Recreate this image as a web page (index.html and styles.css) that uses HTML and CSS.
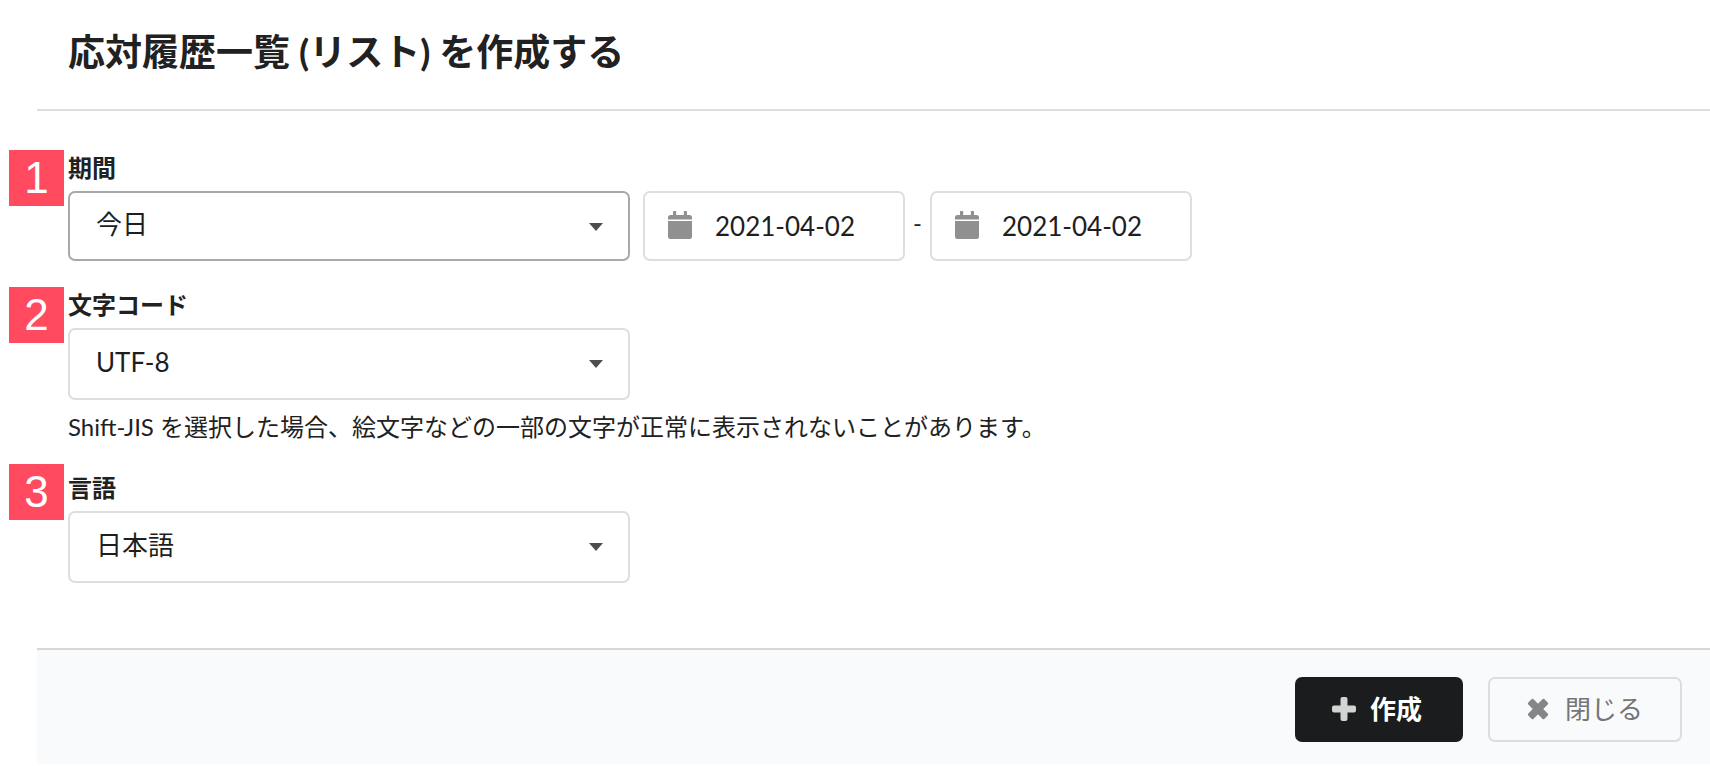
FILE: index.html
```html
<!DOCTYPE html>
<html lang="ja">
<head>
    <meta charset="UTF-8">
    <meta name="viewport" content="width=device-width, initial-scale=1.0">
    <title>応対履歴一覧 (リスト) を作成する</title>
    <link rel="stylesheet" href="styles.css">
</head>
<body>
    <form class="modal">
        <header class="modal-header">
            <h1>応対履歴一覧 (リスト) を作成する</h1>
        </header>

        <div class="modal-body">
            <div class="field">
                <span class="badge">1</span>
                <label for="period">期間</label>
                <div class="row">
                    <div class="dropdown active">
                        <select id="period">
                            <option>今日</option>
                        </select>
                    </div>
                    <div class="dates">
                        <div class="date">
                            <svg class="calendar" viewBox="0 0 24 28" aria-hidden="true">
                                <path d="M0 10h24v15.500a2.500 2.500 0 0 1-2.500 2.500h-19A2.500 2.500 0 0 1 0 25.500zM0 8.500V6.500A2.500 2.500 0 0 1 2.500 4H5V.8a.8.8 0 0 1 .8-.8h1.600a.8.8 0 0 1 .8.8V4h7.600V.8a.8.8 0 0 1 .8-.8h1.600a.8.8 0 0 1 .8.8V4h2.500A2.500 2.500 0 0 1 24 6.500v2z"/>
                            </svg>
                            <input type="text" value="2021-04-02" aria-label="開始日">
                        </div>
                        <span class="dash">-</span>
                        <div class="date">
                            <svg class="calendar" viewBox="0 0 24 28" aria-hidden="true">
                                <path d="M0 10h24v15.500a2.500 2.500 0 0 1-2.500 2.500h-19A2.500 2.500 0 0 1 0 25.500zM0 8.500V6.500A2.500 2.500 0 0 1 2.500 4H5V.8a.8.8 0 0 1 .8-.8h1.600a.8.8 0 0 1 .8.8V4h7.600V.8a.8.8 0 0 1 .8-.8h1.600a.8.8 0 0 1 .8.8V4h2.500A2.500 2.500 0 0 1 24 6.500v2z"/>
                            </svg>
                            <input type="text" value="2021-04-02" aria-label="終了日">
                        </div>
                    </div>
                </div>
            </div>

            <div class="field">
                <span class="badge">2</span>
                <label for="encoding">文字コード</label>
                <div class="dropdown">
                    <select id="encoding">
                        <option>UTF-8</option>
                        <option>Shift-JIS</option>
                    </select>
                </div>
                <p class="help">Shift-JIS を選択した場合、絵文字などの一部の文字が正常に表示されないことがあります。</p>
            </div>

            <div class="field">
                <span class="badge badge-high">3</span>
                <label for="language">言語</label>
                <div class="dropdown">
                    <select id="language">
                        <option>日本語</option>
                    </select>
                </div>
            </div>
        </div>

        <footer class="modal-footer">
            <button type="submit" class="btn btn-primary">
                <svg class="icon" viewBox="0 0 24 24" aria-hidden="true">
                    <path d="M10.500 0h3a2 2 0 0 1 2 2v6.500H22a2 2 0 0 1 2 2v3a2 2 0 0 1-2 2h-6.500V22a2 2 0 0 1-2 2h-3a2 2 0 0 1-2-2v-6.500H2a2 2 0 0 1-2-2v-3a2 2 0 0 1 2-2h6.500V2a2 2 0 0 1 2-2z"/>
                </svg>
                作成
            </button>
            <button type="button" class="btn btn-basic">
                <svg class="icon" viewBox="0 0 24 24" aria-hidden="true">
                    <g transform="rotate(45 11 12)">
                        <rect x="-.5" y="8.250" width="23" height="7.500" rx="1.500"/>
                        <rect x="7.250" y=".5" width="7.500" height="23" rx="1.500"/>
                    </g>
                </svg>
                閉じる
            </button>
        </footer>
    </form>
</body>
</html>
```

FILE: styles.css
```css
* {
    box-sizing: border-box;
}

body {
    margin: 0;
    background: #fff;
    color: #212121;
    font-family: Lato, "Noto Sans CJK JP", sans-serif;
    font-size: 24px;
    line-height: 24px;
}

.modal {
    margin-left: 37px;
}

.modal-header {
    padding: 28px 31px 33px;
    border-bottom: 2px solid #dedede;
}

h1 {
    margin: 0;
    font-size: 37px;
    line-height: 48px;
    font-weight: bold;
}

.modal-body {
    display: flex;
    flex-direction: column;
    gap: 32px;
    padding: 45px 31px 65px;
}

.field {
    position: relative;
    display: flex;
    flex-direction: column;
    gap: 11px;
}

label {
    font-weight: bold;
}

/* number tags hanging left of each field */
.badge {
    position: absolute;
    left: -59px;
    top: -6px;
    width: 55px;
    background: #ff4a60;
    color: #fff;
    font-family: "Liberation Sans", sans-serif;
    font-size: 44px;
    line-height: 56px;
    text-align: center;
}

.badge-high {
    top: -12px;
}

.row,
.dates {
    display: flex;
    flex-wrap: wrap;
    gap: 13px;
}

.dates {
    gap: 8px;
}

.dropdown {
    position: relative;
    width: 562px;
    max-width: 100%;
}

.dropdown::after {
    content: "";
    position: absolute;
    right: 27px;
    top: 32px;
    border: 7px solid transparent;
    border-top: 8px solid #4d4d4d;
    border-bottom: 0;
    pointer-events: none;
}

select,
input {
    width: 100%;
    color: #1e1e1e;
    font-family: inherit;
    font-size: 26px;
    background: #fff;
    border: 2px solid #dedede;
    border-radius: 7px;
}

select {
    appearance: none;
    display: block;
    height: 72px;
    padding: 0 60px 4px 26px;
}

.row select,
input {
    height: 70px;
}

.active select {
    border-color: #a9a9a9;
}

.date {
    position: relative;
    width: 262px;
}

input {
    padding: 0 10px 0 70px;
}

.calendar {
    position: absolute;
    left: 25px;
    top: 20px;
    width: 24px;
    height: 28px;
    fill: #909090;
}

.dash {
    width: 9px;
    line-height: 64px;
    text-align: center;
}

.help {
    margin: 4px 0 5px;
}

.modal-footer {
    display: flex;
    justify-content: flex-end;
    gap: 25px;
    padding: 27px 28px 22px;
    background: #f8fafc;
    border-top: 2px solid #d6d8d8;
}

.btn {
    display: flex;
    align-items: center;
    gap: 14px;
    height: 65px;
    padding: 0 37px 2px;
    border: 0;
    border-radius: 7px;
    font-family: inherit;
    font-size: 26px;
    line-height: 36px;
}

.btn-primary {
    padding-right: 41px;
    background: #1b1c1d;
    color: #fff;
    font-weight: bold;
}

.btn-basic {
    background: transparent;
    border: 2px solid #dcdddf;
    color: #757575;
}

.icon {
    width: 24px;
    height: 24px;
    fill: #d2d3d3;
}

.btn-basic .icon {
    fill: #858687;
}
```
